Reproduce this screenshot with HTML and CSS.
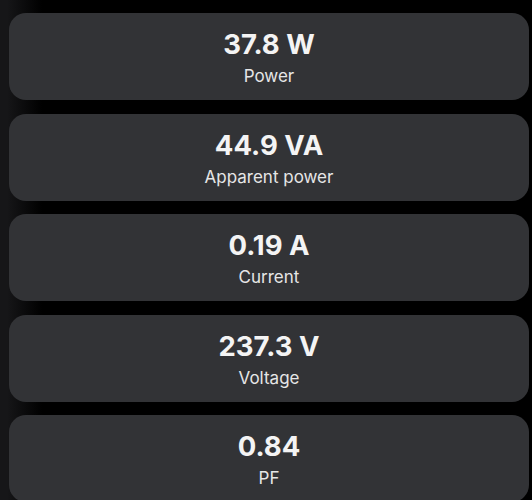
FILE: index.html
```html
<!DOCTYPE html>
<html>
<head>
<meta charset="utf-8">
<link rel="stylesheet" href="styles.css">
</head>
<body>
<div class="list">
  <div class="card"><div class="value">37.8 W</div><div class="label">Power</div></div>
  <div class="card"><div class="value">44.9 VA</div><div class="label">Apparent power</div></div>
  <div class="card"><div class="value">0.19 A</div><div class="label">Current</div></div>
  <div class="card"><div class="value">237.3 V</div><div class="label">Voltage</div></div>
  <div class="card"><div class="value">0.84</div><div class="label">PF</div></div>
</div>
</body>
</html>
```
FILE: styles.css
```css
html, body {
  margin: 0;
  height: 100%;
  overflow: hidden;
}
body {
  background: linear-gradient(to right, #161618 0, #161618 7px, #000 42px);
  font-family: Inter, "Noto Sans", sans-serif;
  color: #f2f2f2;
}
.list {
  display: flex;
  flex-direction: column;
  gap: 13.5px;
  padding: 13px 3px 0 9px;
}
.card {
  flex: none;
  height: 87px;
  box-sizing: border-box;
  background: #323336;
  border-radius: 17px;
  display: flex;
  flex-direction: column;
  align-items: center;
  padding-top: 14px;
}
.value {
  font-size: 27.5px;
  font-weight: 700;
  line-height: 35px;
  color: #f4f4f4;
}
.label {
  font-size: 17px;
  line-height: 26px;
  margin-top: 1px;
  color: #e6e6e6;
}
```
